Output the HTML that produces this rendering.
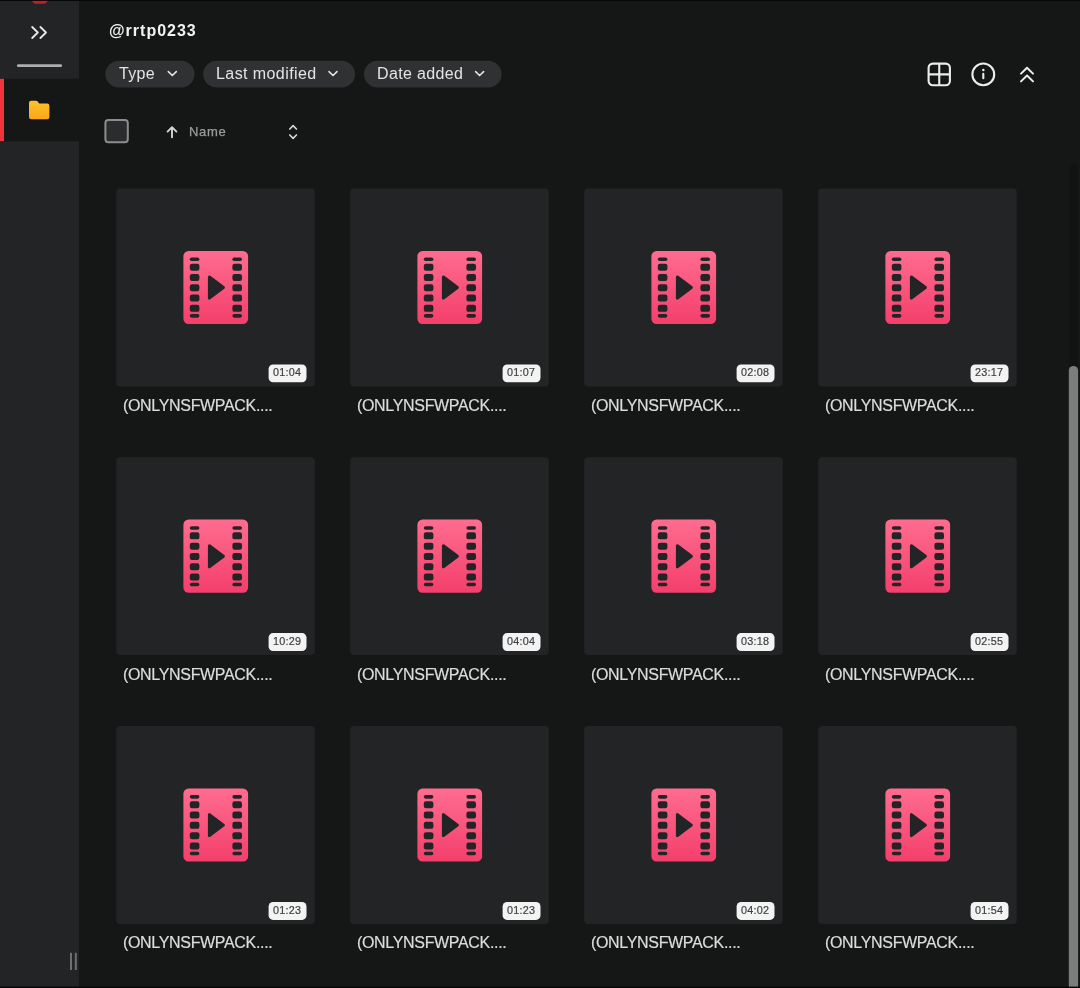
<!DOCTYPE html>
<html lang="en">
<head>
<meta charset="utf-8">
<title>@rrtp0233</title>
<style>
*{box-sizing:border-box;margin:0;padding:0}
html,body{width:1080px;height:988px;overflow:hidden;background:#151716}
body{position:relative;font-family:"Liberation Sans",sans-serif;color:#e6e6e6}
.abs{position:absolute}
#art{left:0;top:0;overflow:visible}
#wrap{left:0;top:0;width:1080px;height:988px}
#title,.chip,#name,.fn,.badge{will-change:transform;white-space:nowrap}
#title{left:109.4px;top:20.5px;letter-spacing:1px;font-size:16px;font-weight:700;line-height:20px;color:#f2f2f2}
.chip{top:60.4px;line-height:27px;font-size:16px;color:#e4e4e4}
#name{left:188.6px;top:123.5px;letter-spacing:0.65px;font-size:13px;line-height:16px;color:#9b9c9d;-webkit-text-stroke:0.25px #9b9c9d}
.badge{width:38px;height:18px;color:#3f4041;font-size:10.8px;letter-spacing:0.3px;text-indent:0.3px;-webkit-text-stroke:0.2px #3f4041;line-height:18px;text-align:center}
.fn{font-size:16px;letter-spacing:-0.33px;line-height:20px;color:#dcdcdc;-webkit-text-stroke:0.2px #dcdcdc}
</style>
</head>
<body>
<div class="abs" id="wrap">
<svg class="abs" id="art" width="1080" height="988" viewBox="0 0 1080 988">
<defs>
<linearGradient id="fg" x1="0" y1="0" x2="0" y2="1"><stop offset="0" stop-color="#ffc32b"/><stop offset="1" stop-color="#fba51a"/></linearGradient>
<linearGradient id="vg" x1="0" y1="0" x2="0" y2="1"><stop offset="0" stop-color="#ff6c8f"/><stop offset="1" stop-color="#f33f6b"/></linearGradient>
<g id="vid"><rect x="0" y="0" width="64.7" height="73.1" rx="5.2" fill="url(#vg)"/><g fill="#232426">
<rect x="6.4" y="6.55" width="9.6" height="3.6" rx="1.8"/>
<rect x="6.4" y="12.75" width="9.6" height="7" rx="2.2"/>
<rect x="6.4" y="23.05" width="9.6" height="7" rx="2.2"/>
<rect x="6.4" y="33.35" width="9.6" height="7" rx="2.2"/>
<rect x="6.4" y="43.65" width="9.6" height="7" rx="2.2"/>
<rect x="6.4" y="53.95" width="9.6" height="7" rx="2.2"/>
<rect x="6.4" y="63.15" width="9.6" height="3.6" rx="1.8"/>
<rect x="49.0" y="6.55" width="9.6" height="3.6" rx="1.8"/>
<rect x="49.0" y="12.75" width="9.6" height="7" rx="2.2"/>
<rect x="49.0" y="23.05" width="9.6" height="7" rx="2.2"/>
<rect x="49.0" y="33.35" width="9.6" height="7" rx="2.2"/>
<rect x="49.0" y="43.65" width="9.6" height="7" rx="2.2"/>
<rect x="49.0" y="53.95" width="9.6" height="7" rx="2.2"/>
<rect x="49.0" y="63.15" width="9.6" height="3.6" rx="1.8"/>
<path d="M26 26.1 L40 36.65 L26 47.15 Z" stroke="#232426" stroke-width="3" stroke-linejoin="round"/>
</g></g>
<g id="chev" fill="none" stroke="#e4e4e4" stroke-width="1.6" stroke-linecap="round" stroke-linejoin="round"><path d="M-4 -1.95 L0 1.95 L4 -1.95"/></g>
</defs>
<rect x="-9" y="-9" width="88" height="1006" fill="#232426"/>
<rect x="-9" y="78.8" width="88" height="62.4" fill="#151616"/>
<rect x="-9" y="78.8" width="13" height="62.4" fill="#f0323a"/>
<rect x="32" y="-8" width="15.8" height="11.8" rx="5" ry="4" fill="#c01e28"/>
<g fill="none" stroke="#e9e9e9" stroke-width="1.8" stroke-linecap="round" stroke-linejoin="round" transform="translate(29 24)"><path d="M3.2 3 L8.8 8.5 L3.2 14"/><path d="M11.4 3 L17 8.5 L11.4 14"/></g>
<rect x="17" y="64.3" width="45" height="2.6" rx="1.2" fill="#adaeaf"/>
<path transform="translate(29 99.6) scale(1.02 1.04)" d="M0 3.2 Q0 1 2.2 1 H6.6 Q7.8 1 8.5 1.9 L9.6 3.2 Q10 3.7 10.8 3.7 H17.8 Q20 3.7 20 5.9 V16.8 Q20 19 17.8 19 H2.2 Q0 19 0 16.8 Z" fill="url(#fg)"/>
<rect x="70" y="952.8" width="2" height="17.2" fill="#6e6f70"/><rect x="74.8" y="952.8" width="2" height="17.2" fill="#6e6f70"/>
<rect x="105.4" y="60.8" width="89.1" height="26.7" rx="13.35" fill="#303132"/>
<use href="#chev" x="172.3" y="73.6"/>
<rect x="203.2" y="60.8" width="151.8" height="26.7" rx="13.35" fill="#303132"/>
<use href="#chev" x="333" y="73.6"/>
<rect x="364" y="60.8" width="137.6" height="26.7" rx="13.35" fill="#303132"/>
<use href="#chev" x="479.6" y="73.6"/>
<g fill="none" stroke="#ececec" stroke-width="2.1" transform="translate(927 62)"><rect x="1.6" y="1.6" width="21.3" height="21.6" rx="4.2"/><path d="M12.25 1.6 V23.2 M1.6 12.4 H22.9"/></g>
<g fill="none" stroke="#ececec" stroke-width="2.1" transform="translate(970 62)"><circle cx="13.3" cy="12.4" r="10.9"/><path d="M13.3 11.9 V16.2" stroke-linecap="round"/><circle cx="13.3" cy="8" r="1.25" fill="#ececec" stroke="none"/></g>
<g fill="none" stroke="#ececec" stroke-width="2" stroke-linecap="round" stroke-linejoin="round" transform="translate(1018 64)"><path d="M3 9.6 L9 3.7 L15 9.6"/><path d="M3 17.4 L9 11.5 L15 17.4"/></g>
<rect x="105.4" y="119.9" width="22.4" height="22.4" rx="3" fill="#2b2c2e" stroke="#8b8c8d" stroke-width="2"/>
<g fill="none" stroke="#d6d6d6" stroke-width="1.9" stroke-linecap="round" stroke-linejoin="round" transform="translate(165 125)"><path d="M7 12.2 V2.4 M2.6 6.6 L7 2.2 L11.4 6.6"/></g>
<g fill="none" stroke="#d6d6d6" stroke-width="1.7" stroke-linecap="round" stroke-linejoin="round" transform="translate(287 123)"><path d="M2.8 6 L6.1 2.7 L9.4 6"/><path d="M2.8 12 L6.1 15.3 L9.4 12"/></g>
<rect x="116.2" y="188.5" width="198.6" height="197.9" rx="4" fill="#232426"/>
<use href="#vid" x="183.4" y="250.9"/>
<rect x="268.6" y="364.4" width="37.9" height="17.9" rx="4.5" fill="#f3f3f3"/>
<rect x="350.2" y="188.5" width="198.6" height="197.9" rx="4" fill="#232426"/>
<use href="#vid" x="417.4" y="250.9"/>
<rect x="502.6" y="364.4" width="37.9" height="17.9" rx="4.5" fill="#f3f3f3"/>
<rect x="584.2" y="188.5" width="198.6" height="197.9" rx="4" fill="#232426"/>
<use href="#vid" x="651.4" y="250.9"/>
<rect x="736.6" y="364.4" width="37.9" height="17.9" rx="4.5" fill="#f3f3f3"/>
<rect x="818.2" y="188.5" width="198.6" height="197.9" rx="4" fill="#232426"/>
<use href="#vid" x="885.4" y="250.9"/>
<rect x="970.6" y="364.4" width="37.9" height="17.9" rx="4.5" fill="#f3f3f3"/>
<rect x="116.2" y="457.2" width="198.6" height="197.9" rx="4" fill="#232426"/>
<use href="#vid" x="183.4" y="519.6"/>
<rect x="268.6" y="633.1" width="37.9" height="17.9" rx="4.5" fill="#f3f3f3"/>
<rect x="350.2" y="457.2" width="198.6" height="197.9" rx="4" fill="#232426"/>
<use href="#vid" x="417.4" y="519.6"/>
<rect x="502.6" y="633.1" width="37.9" height="17.9" rx="4.5" fill="#f3f3f3"/>
<rect x="584.2" y="457.2" width="198.6" height="197.9" rx="4" fill="#232426"/>
<use href="#vid" x="651.4" y="519.6"/>
<rect x="736.6" y="633.1" width="37.9" height="17.9" rx="4.5" fill="#f3f3f3"/>
<rect x="818.2" y="457.2" width="198.6" height="197.9" rx="4" fill="#232426"/>
<use href="#vid" x="885.4" y="519.6"/>
<rect x="970.6" y="633.1" width="37.9" height="17.9" rx="4.5" fill="#f3f3f3"/>
<rect x="116.2" y="726.1" width="198.6" height="197.9" rx="4" fill="#232426"/>
<use href="#vid" x="183.4" y="788.5"/>
<rect x="268.6" y="902.0" width="37.9" height="17.9" rx="4.5" fill="#f3f3f3"/>
<rect x="350.2" y="726.1" width="198.6" height="197.9" rx="4" fill="#232426"/>
<use href="#vid" x="417.4" y="788.5"/>
<rect x="502.6" y="902.0" width="37.9" height="17.9" rx="4.5" fill="#f3f3f3"/>
<rect x="584.2" y="726.1" width="198.6" height="197.9" rx="4" fill="#232426"/>
<use href="#vid" x="651.4" y="788.5"/>
<rect x="736.6" y="902.0" width="37.9" height="17.9" rx="4.5" fill="#f3f3f3"/>
<rect x="818.2" y="726.1" width="198.6" height="197.9" rx="4" fill="#232426"/>
<use href="#vid" x="885.4" y="788.5"/>
<rect x="970.6" y="902.0" width="37.9" height="17.9" rx="4.5" fill="#f3f3f3"/>
<rect x="1069.5" y="164" width="8.5" height="840" rx="4.2" fill="#111312"/>
<rect x="1068.8" y="366" width="9.3" height="640" rx="4.6" fill="#7b7d7c"/>
<rect x="-9" y="-9" width="1098" height="9.9" fill="#050505"/>
<rect x="-9" y="986.6" width="1098" height="10" fill="#050505"/>
</svg>
<div class="abs" id="title">@rrtp0233</div>
<div class="abs chip" style="left:119.4px;letter-spacing:0.3px">Type</div>
<div class="abs chip" style="left:215.8px;letter-spacing:0.42px">Last modified</div>
<div class="abs chip" style="left:376.6px;letter-spacing:0.35px">Date added</div>
<div class="abs" id="name">Name</div>
<div class="abs badge" style="left:268.0px;top:363.4px">01:04</div>
<div class="abs badge" style="left:502.0px;top:363.4px">01:07</div>
<div class="abs badge" style="left:736.0px;top:363.4px">02:08</div>
<div class="abs badge" style="left:970.0px;top:363.4px">23:17</div>
<div class="abs fn" style="left:123.0px;top:396.0px">(ONLYNSFWPACK....</div>
<div class="abs fn" style="left:357.0px;top:396.0px">(ONLYNSFWPACK....</div>
<div class="abs fn" style="left:591.0px;top:396.0px">(ONLYNSFWPACK....</div>
<div class="abs fn" style="left:825.0px;top:396.0px">(ONLYNSFWPACK....</div>
<div class="abs badge" style="left:268.0px;top:632.1px">10:29</div>
<div class="abs badge" style="left:502.0px;top:632.1px">04:04</div>
<div class="abs badge" style="left:736.0px;top:632.1px">03:18</div>
<div class="abs badge" style="left:970.0px;top:632.1px">02:55</div>
<div class="abs fn" style="left:123.0px;top:665.0px">(ONLYNSFWPACK....</div>
<div class="abs fn" style="left:357.0px;top:665.0px">(ONLYNSFWPACK....</div>
<div class="abs fn" style="left:591.0px;top:665.0px">(ONLYNSFWPACK....</div>
<div class="abs fn" style="left:825.0px;top:665.0px">(ONLYNSFWPACK....</div>
<div class="abs badge" style="left:268.0px;top:901.0px">01:23</div>
<div class="abs badge" style="left:502.0px;top:901.0px">01:23</div>
<div class="abs badge" style="left:736.0px;top:901.0px">04:02</div>
<div class="abs badge" style="left:970.0px;top:901.0px">01:54</div>
<div class="abs fn" style="left:123.0px;top:933.0px">(ONLYNSFWPACK....</div>
<div class="abs fn" style="left:357.0px;top:933.0px">(ONLYNSFWPACK....</div>
<div class="abs fn" style="left:591.0px;top:933.0px">(ONLYNSFWPACK....</div>
<div class="abs fn" style="left:825.0px;top:933.0px">(ONLYNSFWPACK....</div>
</div>
</body>
</html>
